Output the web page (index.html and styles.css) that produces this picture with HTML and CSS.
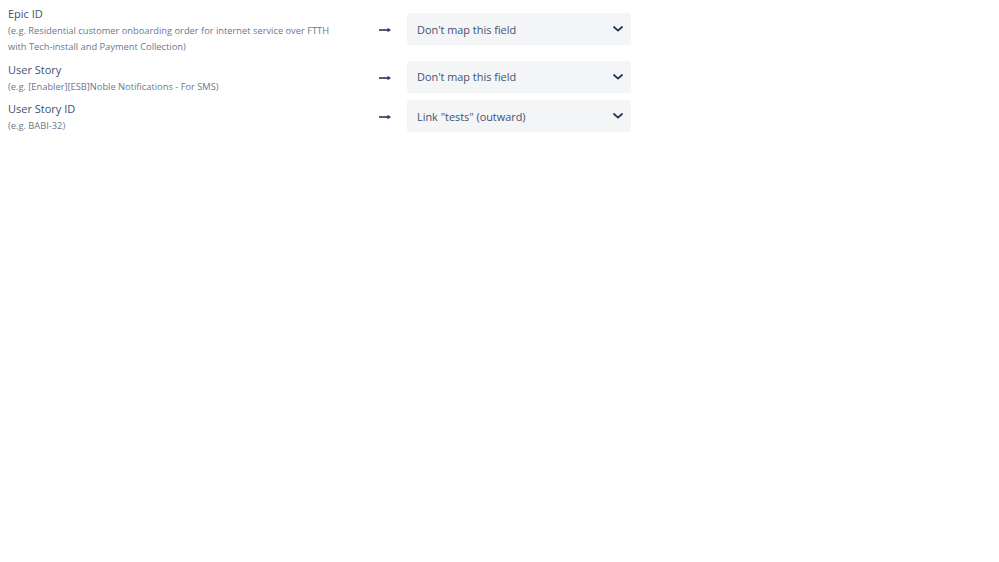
FILE: index.html
```html
<!DOCTYPE html>
<html>
<head>
<meta charset="utf-8">
<link rel="stylesheet" href="styles.css">
</head>
<body>
<div class="mapping">
  <div class="row">
    <div class="field">
      <div class="title">Epic ID</div>
      <div class="desc">(e.g. Residential customer onboarding order for internet service over FTTH with Tech-install and Payment Collection)</div>
    </div>
    <div class="arrow"><svg width="12" height="6" viewBox="0 0 12 6"><path d="M0 3H10" stroke="#253858" stroke-width="1.6"/><path d="M8.5 0.8L12 3L8.5 5.2Z" fill="#253858"/></svg></div>
    <div class="select"><span>Don't map this field</span><svg class="chev" width="10" height="6" viewBox="0 0 10 6"><path d="M1 1L5 4.6L9 1" fill="none" stroke="#253858" stroke-width="1.8" stroke-linecap="round" stroke-linejoin="round"/></svg></div>
  </div>
  <div class="row">
    <div class="field">
      <div class="title">User Story</div>
      <div class="desc">(e.g. [Enabler][ESB]Noble Notifications - For SMS)</div>
    </div>
    <div class="arrow"><svg width="12" height="6" viewBox="0 0 12 6"><path d="M0 3H10" stroke="#253858" stroke-width="1.6"/><path d="M8.5 0.8L12 3L8.5 5.2Z" fill="#253858"/></svg></div>
    <div class="select"><span>Don't map this field</span><svg class="chev" width="10" height="6" viewBox="0 0 10 6"><path d="M1 1L5 4.6L9 1" fill="none" stroke="#253858" stroke-width="1.8" stroke-linecap="round" stroke-linejoin="round"/></svg></div>
  </div>
  <div class="row">
    <div class="field">
      <div class="title">User Story ID</div>
      <div class="desc">(e.g. BABI-32)</div>
    </div>
    <div class="arrow"><svg width="12" height="6" viewBox="0 0 12 6"><path d="M0 3H10" stroke="#253858" stroke-width="1.6"/><path d="M8.5 0.8L12 3L8.5 5.2Z" fill="#253858"/></svg></div>
    <div class="select"><span>Link "tests" (outward)</span><svg class="chev" width="10" height="6" viewBox="0 0 10 6"><path d="M1 1L5 4.6L9 1" fill="none" stroke="#253858" stroke-width="1.8" stroke-linecap="round" stroke-linejoin="round"/></svg></div>
  </div>
</div>
</body>
</html>
```
FILE: styles.css
```css
html, body {
  margin: 0;
  padding: 0;
  background: #ffffff;
}
body {
  font-family: "Open Sans", "Noto Sans", sans-serif;
}
.mapping {
  display: flex;
  flex-direction: column;
  gap: 5.5px;
  padding: 5px 0 0 8px;
}
.row {
  display: grid;
  grid-template-columns: 365px 34px 224px;
  align-items: center;
}
.title {
  font-size: 11px;
  line-height: 18px;
  color: #42526e;
}
.desc {
  font-size: 9.3px;
  line-height: 16px;
  color: #6b778c;
  max-width: 330px;
}
.arrow {
  padding-left: 6px;
  display: flex;
  align-items: center;
  height: 6px;
}
.arrow svg { display: block; }
.select {
  height: 32px;
  margin-bottom: 2px;
  background: #f4f5f7;
  border-radius: 3px;
  display: flex;
  align-items: center;
  justify-content: space-between;
  padding: 0 8px 0 10px;
  font-size: 10.9px;
  color: #42526e;
}
.chev { display: block; }
```
